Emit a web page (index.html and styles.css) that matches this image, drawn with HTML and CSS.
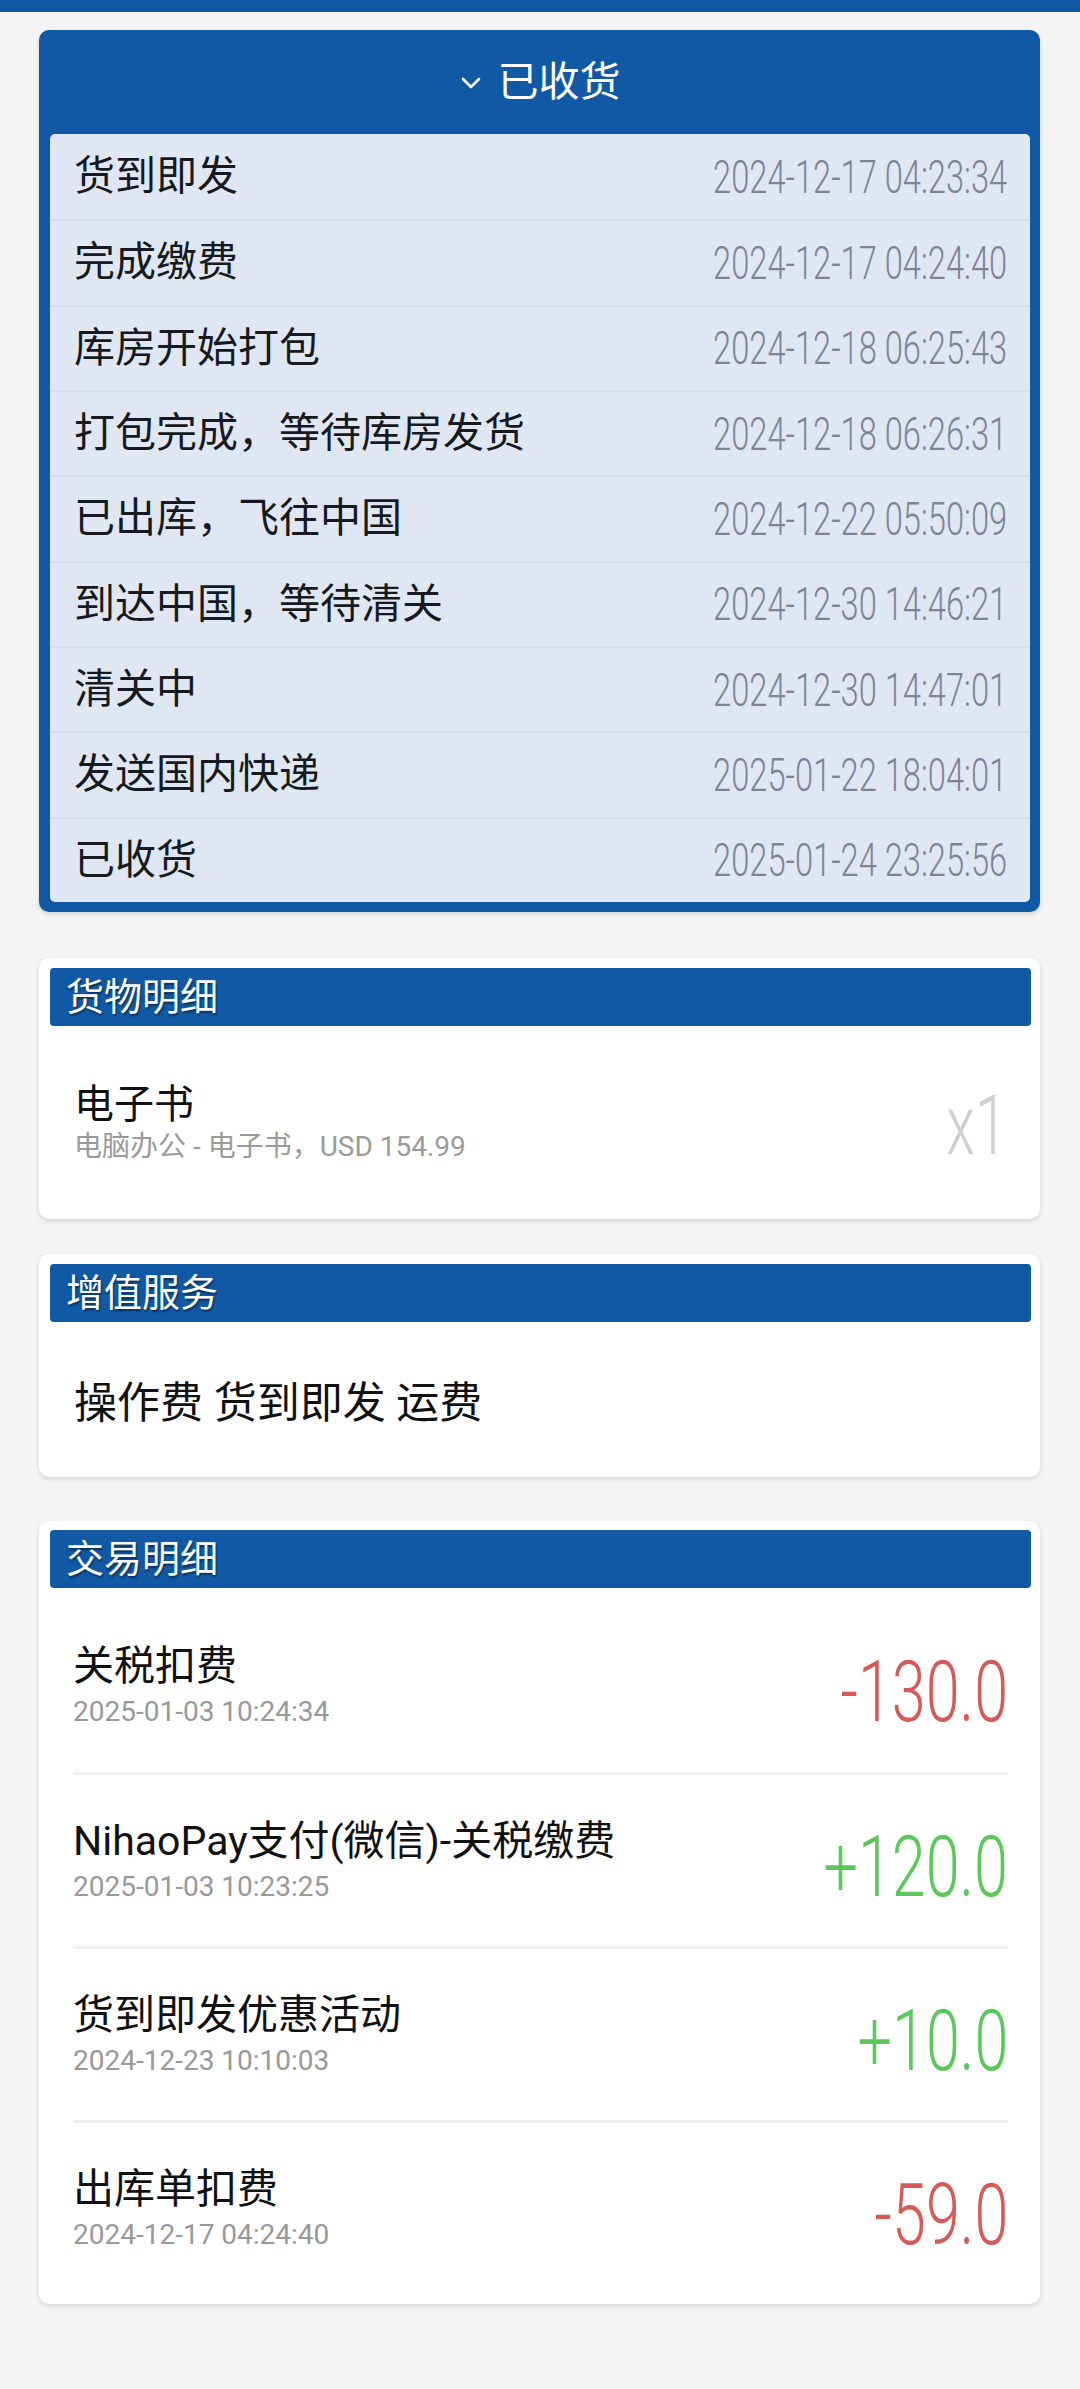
FILE: index.html
```html
<!DOCTYPE html>
<html lang="zh-CN">
<head>
<meta charset="utf-8">
<title>订单详情</title>
<link rel="stylesheet" href="styles.css">
</head>
<body>
<div class="topbar"></div>
<main class="page">
  <section class="status-card">
    <div class="status-head">
      <svg class="chev" width="22" height="12" viewBox="0 0 22 12"><polyline points="3,2 11,10 19,2" fill="none" stroke="#fff" stroke-width="2.6" stroke-linecap="round" stroke-linejoin="round"/></svg>
      <span class="status-title">已收货</span>
    </div>
    <ul class="track">
      <li class="track-row"><span class="track-name">货到即发</span><span class="track-time">2024-12-17 04:23:34</span></li>
      <li class="track-row"><span class="track-name">完成缴费</span><span class="track-time">2024-12-17 04:24:40</span></li>
      <li class="track-row"><span class="track-name">库房开始打包</span><span class="track-time">2024-12-18 06:25:43</span></li>
      <li class="track-row"><span class="track-name">打包完成，等待库房发货</span><span class="track-time">2024-12-18 06:26:31</span></li>
      <li class="track-row"><span class="track-name">已出库，飞往中国</span><span class="track-time">2024-12-22 05:50:09</span></li>
      <li class="track-row"><span class="track-name">到达中国，等待清关</span><span class="track-time">2024-12-30 14:46:21</span></li>
      <li class="track-row"><span class="track-name">清关中</span><span class="track-time">2024-12-30 14:47:01</span></li>
      <li class="track-row"><span class="track-name">发送国内快递</span><span class="track-time">2025-01-22 18:04:01</span></li>
      <li class="track-row"><span class="track-name">已收货</span><span class="track-time">2025-01-24 23:25:56</span></li>
    </ul>
  </section>

  <section class="card card-goods">
    <h2 class="card-head">货物明细</h2>
    <div class="goods">
      <div class="goods-info">
        <div class="goods-name">电子书</div>
        <div class="goods-sub">电脑办公 - 电子书，USD 154.99</div>
      </div>
      <span class="goods-qty">x1</span>
    </div>
  </section>

  <section class="card card-service">
    <h2 class="card-head">增值服务</h2>
    <div class="service">操作费 货到即发 运费</div>
  </section>

  <section class="card card-trade">
    <h2 class="card-head">交易明细</h2>
    <ul class="trades">
      <li class="trade">
        <div class="trade-info"><div class="trade-name">关税扣费</div><div class="trade-time">2025-01-03 10:24:34</div></div>
        <span class="amount neg">-130.0</span>
      </li>
      <li class="trade">
        <div class="trade-info"><div class="trade-name">NihaoPay支付(微信)-关税缴费</div><div class="trade-time">2025-01-03 10:23:25</div></div>
        <span class="amount pos">+120.0</span>
      </li>
      <li class="trade">
        <div class="trade-info"><div class="trade-name">货到即发优惠活动</div><div class="trade-time">2024-12-23 10:10:03</div></div>
        <span class="amount pos">+10.0</span>
      </li>
      <li class="trade">
        <div class="trade-info"><div class="trade-name">出库单扣费</div><div class="trade-time">2024-12-17 04:24:40</div></div>
        <span class="amount neg">-59.0</span>
      </li>
    </ul>
  </section>
</main>
</body>
</html>
```

FILE: styles.css
```css
* { box-sizing: border-box; }
html, body { margin: 0; padding: 0; }
body {
  background: #f4f4f4;
  font-family: Roboto, "Noto Sans CJK SC", sans-serif;
  color: #111;
  width: 1080px;
  min-height: 2389px;
}
ul { list-style: none; margin: 0; padding: 0; }
h2 { margin: 0; font-weight: 400; }

.topbar { height: 12px; background: #1058a6; }

.page { padding: 18px 40px 0 39px; }

/* status card */
.status-card {
  background: #1158a5;
  border-radius: 10px;
  padding: 0 10px 10px 11px;
  box-shadow: 0 2px 4px rgba(0,0,0,0.15);
}
.status-head {
  height: 104px;
  display: flex;
  align-items: center;
  justify-content: center;
  gap: 16px;
  color: #fff;
}
.chev { display: block; margin-top: 2px; }
.status-title { font-size: 41px; line-height: 1; }

.track {
  background: #dfe7f3;
  border-radius: 5px;
}
.track-row {
  height: 85.33px;
  display: flex;
  align-items: center;
  justify-content: space-between;
  padding: 0 23px 0 24px;
  border-top: 2px solid #d6deeb;
}
.track-row:first-child { border-top: none; }
.track-name { font-size: 41px; color: #161a20; line-height: 1; }
.track-time {
  display: inline-block;
  font-size: 46px;
  font-weight: 300;
  color: #7d8593;
  transform: scaleX(0.71);
  transform-origin: right center;
  white-space: nowrap;
  line-height: 1;
}

/* white cards */
.card {
  background: #fff;
  border-radius: 10px;
  padding: 10px 9px 0 11px;
  box-shadow: 0 2px 5px rgba(0,0,0,0.13);
}
.card-goods { margin-top: 46px; }
.card-service { margin-top: 35px; }
.card-trade { margin-top: 44px; padding-top: 9px; padding-bottom: 10px; }

.card-head {
  height: 58px;
  background: #1158a5;
  border-radius: 4px;
  color: #fff;
  font-size: 38px;
  line-height: 58px;
  padding-left: 16px;
  text-shadow: 1px 2px 2px rgba(0,0,0,0.45);
}

.goods {
  height: 193px;
  display: flex;
  align-items: center;
  justify-content: space-between;
  padding: 0 24px 0 24px;
}
.goods-name { font-size: 40px; line-height: 48px; }
.goods-sub { font-size: 28px; line-height: 32px; color: #9a9a9a; margin-top: 2px; }
.goods-qty {
  display: inline-block;
  font-size: 84px;
  font-weight: 300;
  color: #cfcfcf;
  line-height: 1;
  transform: scaleX(0.7);
  transform-origin: right center;
  margin-top: 8px;
}

.service {
  height: 155px;
  display: flex;
  align-items: center;
  padding-left: 24px;
  font-size: 43px;
}

.trades { margin-top: 10px; }
.trade {
  height: 174px;
  margin: 0 23px 0 23px;
  display: flex;
  align-items: center;
  justify-content: space-between;
  border-top: 3px solid #f0f0f0;
}
.trade:first-child { border-top: none; height: 174px; }
.trade-name { font-size: 41px; line-height: 48px; color: #111; }
.trade-time { font-size: 28px; line-height: 32px; color: #999; margin-top: 6px; }
.amount {
  display: inline-block;
  font-size: 86px;
  font-weight: 300;
  line-height: 1;
  transform: scaleX(0.71);
  transform-origin: right center;
  white-space: nowrap;
  margin-top: 14px;
}
.neg { color: #d45b58; }
.pos { color: #5cc75b; }
```
